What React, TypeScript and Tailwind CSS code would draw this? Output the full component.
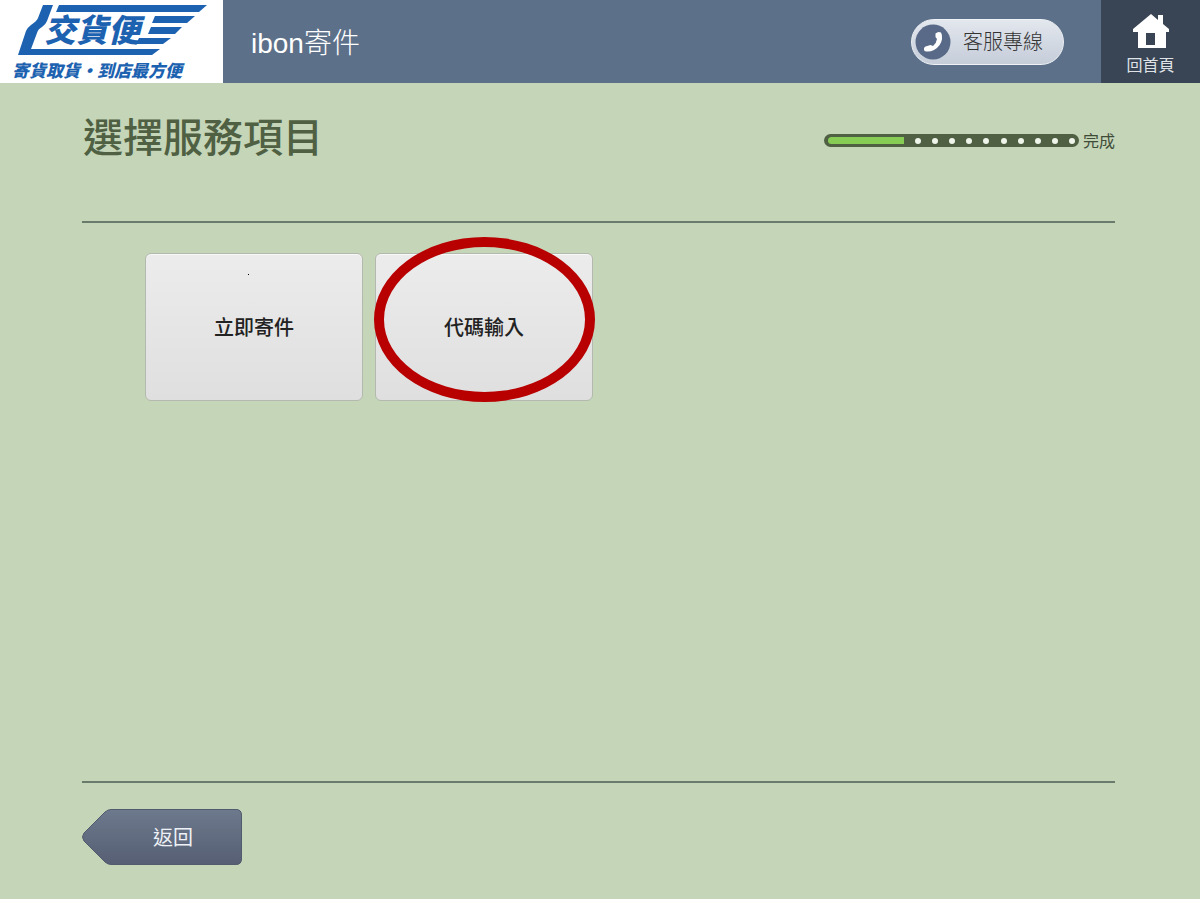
const CJK = "font-['Liberation_Sans','Noto_Sans_CJK_TC',sans-serif]";

const TOTAL_DOTS = 10;

function Logo() {
  return (
    <svg viewBox="0 0 223 83" className="block h-[83px] w-[223px]" role="img" aria-label="交貨便 寄貨取貨·到店最方便">
      <g fill="#1c62b0">
        <path d="M43 5H53L47 21Q46 24 42 27Q38 29 37 33L31 49H160L152 55H18L26 31Q27 28 31 25Q37 21 38 18Z" />
        <path d="M59 5H207L199 12H56Z" />
        <path d="M155 16H195L187 23H152Z" />
        <path d="M151 27H182L175 34H148Z" />
        <path d="M139 38H171L163 44H136Z" />
      </g>
      <g fill="#1c62b0" className="font-['Noto_Sans_CJK_TC',sans-serif] font-black italic">
        <text x="44" y="42" fontSize="32">交貨便</text>
        <text x="12" y="77" fontSize="17">寄貨取貨·到店最方便</text>
      </g>
    </svg>
  );
}

function HomeIcon() {
  return (
    <svg viewBox="0 0 36 36" className="h-9 w-9 fill-white" aria-hidden="true">
      <path fillRule="evenodd" d="M18 1L25 7V2H30V11L36 16V19H33V35H5V19H0V16ZM13 20V32H22V20Z" />
    </svg>
  );
}

function PhoneIcon() {
  return (
    <svg viewBox="0 0 36 36" className="h-9 w-9" aria-hidden="true">
      <circle cx="18" cy="18" r="17.5" fill="#586a88" />
      <path
        d="M20.500 9.500Q23 7 26 8.500Q27.500 11 27 15Q26 22 19 26Q14 28.500 9.500 27Q8 24 10.500 22.500L15.500 21L18 22Q21.500 19 22 15L20.500 13Z"
        fill="#fff"
      />
    </svg>
  );
}

function Progress() {
  return (
    <div className="flex items-center gap-1">
      <div
        role="progressbar"
        aria-label="進度"
        aria-valuenow={30}
        className="flex h-[13px] w-[255px] items-center justify-between rounded-full bg-[#4f6043] pr-1 pl-1"
      >
        <span className="h-[7px] w-[76px] rounded-l-full bg-[#87cc55]" />
        <span className="flex w-[160px] justify-between">
          {Array.from({ length: TOTAL_DOTS }, (_, i) => (
            <span key={i} className="h-[6px] w-[6px] rounded-full bg-[#f0f5ea]" />
          ))}
        </span>
      </div>
      <span className="pt-[3px] text-base leading-6 text-[#3f4d38]">完成</span>
    </div>
  );
}

const cardClass =
  "h-[148px] w-[218px] rounded-md border border-[#b3b9af] bg-linear-to-b from-[#ececec] to-[#dfdfdf] pt-px text-[20px] font-medium text-[#222] shadow-[inset_0_1px_0_#f8f8f8]";

export default function App() {
  return (
    <div className={`flex min-h-screen flex-col bg-[#c5d5b8] ${CJK}`}>
      <header className="flex h-[83px] items-stretch bg-[#5d7089]">
        <div className="bg-white">
          <Logo />
        </div>
        <p className="flex-1 self-center pt-1 pl-7 text-[28px] leading-9 font-light text-white">ibon寄件</p>
        <button
          type="button"
          className="mr-[37px] flex h-[46px] w-[153px] items-center gap-3 self-center rounded-full border border-[#eef1f5] bg-linear-to-b from-[#e3e7ee] to-[#c5cdd9] pl-[3px] text-[20px] font-light text-[#333]"
        >
          <PhoneIcon />
          客服專線
        </button>
        <a
          href="#home"
          className="flex w-[99px] flex-col items-center bg-[#394454] pt-[13px] text-base leading-[34px] text-[#dfe3e8]"
        >
          <HomeIcon />
          回首頁
        </a>
      </header>

      <main className="flex flex-1 flex-col pr-[85px] pl-[82px]">
        <div className="flex h-[138px] items-start justify-between pt-6">
          <h1 className="pt-px pl-px text-[40px] leading-[60px] font-medium text-[#4f6043]">選擇服務項目</h1>
          <div className="pt-5">
            <Progress />
          </div>
        </div>
        <section className="flex-1 border-y-2 border-[#6b7b6b] pt-[30px] pl-[63px]">
          <div className="flex flex-wrap gap-3">
            <button type="button" className={`relative ${cardClass}`}>
              <span className="absolute top-5 left-[102px] h-px w-px bg-black" />
              立即寄件
            </button>
            <div className="relative">
              <button type="button" className={cardClass}>
                代碼輸入
              </button>
              <span className="pointer-events-none absolute -top-4 -left-px h-[165px] w-[221px] rounded-[50%] border-10 border-[#b90000]" />
            </div>
          </div>
        </section>
        <footer className="flex h-[116px] items-start pt-[26px]">
          <button type="button" className="relative h-14 w-40 pt-[2px] text-[20px] text-[#eef1f6]">
            <svg viewBox="0 0 160 56" className="absolute inset-0 h-full w-full" aria-hidden="true">
              <defs>
                <linearGradient id="back-fill" x1="0" y1="0" x2="0" y2="1">
                  <stop offset="0" stopColor="#6d798c" />
                  <stop offset="1" stopColor="#565f74" />
                </linearGradient>
              </defs>
              <path
                d="M29 0.5H154Q159.500 0.500 159.500 6V50Q159.500 55.500 154 55.500H29Q26 55.500 23 53L2 32Q-1 28 2 24L23 3Q26 0.500 29 0.500Z"
                fill="url(#back-fill)"
                stroke="#525c6e"
              />
            </svg>
            <span className="relative pl-[22px]">返回</span>
          </button>
        </footer>
      </main>
    </div>
  );
}
